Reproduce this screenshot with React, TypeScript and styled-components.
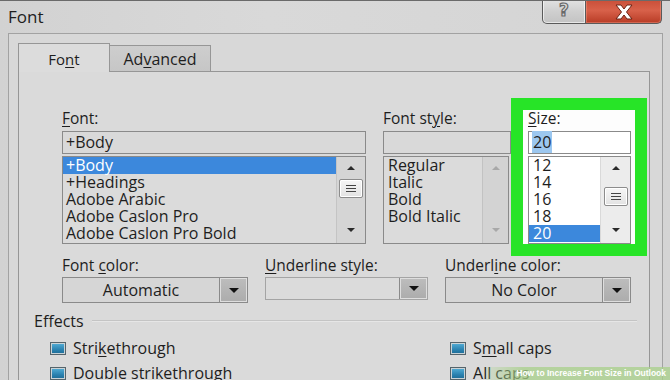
import React from "react";
import styled, { createGlobalStyle } from "styled-components";

const Global = createGlobalStyle`
  html, body { margin: 0; padding: 0; background: #d5d5d5; }
  body { font-family: "Open Sans", "Noto Sans", sans-serif; }
  * { box-sizing: border-box; }
`;

const Dialog = styled.div`
  position: relative;
  width: 670px;
  height: 380px;
  overflow: hidden;
  display: flex;
  flex-direction: column;
  background: linear-gradient(90deg, #d2d2d2, #d9d9d9 40%, #d4d4d4);
  border-top: 1px solid #6a6a6a;
  color: #1e1e1e;
  font-family: "Open Sans", "Noto Sans", sans-serif;
`;

const TitleBar = styled.div`
  height: 32px;
  display: flex;
  align-items: flex-start;
  padding: 0 8px 0 8px;
  flex-shrink: 0;
`;

const Title = styled.div`
  flex: 1;
  font-size: 17px;
  line-height: 33px;
  margin-top: -1px;
`;

const Caption = styled.div`
  display: flex;
  margin-top: -1px;
`;

const CaptionButton = styled.div<{ $close?: boolean }>`
  width: ${(p) => (p.$close ? 76 : 44)}px;
  height: 24px;
  display: flex;
  align-items: center;
  justify-content: center;
  border: 1px solid #5a5a5a;
  border-top: none;
  ${(p) => (p.$close ? "border-left: none;" : "")}
  border-radius: ${(p) => (p.$close ? "0 0 5px 0" : "0 0 0 5px")};
  background: ${(p) =>
    p.$close
      ? "linear-gradient(#c94f39, #d8614a 45%, #b83c26)"
      : "linear-gradient(#e2e2e2, #cfcfcf 50%, #c3c3c3)"};
  box-shadow: inset 0 0 0 1px ${(p) => (p.$close ? "rgba(255,180,160,0.35)" : "rgba(255,255,255,0.6)")};
`;

const HelpGlyph = styled.span`
  font-family: "DejaVu Sans", sans-serif;
  font-weight: bold;
  font-size: 17px;
  line-height: 1;
  color: #d8d8d8;
  -webkit-text-stroke: 1.2px #6a6a6a;
  margin-top: -2px;
`;

const Frame = styled.div`
  flex: 1;
  margin: 0 7px 0 8px;
  border: 1px solid #a2a2a2;
  border-bottom: none;
  padding: 9px 12px 0 9px;
  display: flex;
  flex-direction: column;
  background: #d8d8d8;
`;

const TabStrip = styled.div`
  display: flex;
  align-items: flex-end;
  height: 28px;
  position: relative;
  z-index: 1;
`;

const Tab = styled.div<{ $active?: boolean }>`
  width: ${(p) => (p.$active ? 92 : 101)}px;
  height: ${(p) => (p.$active ? 29 : 26)}px;
  margin-bottom: ${(p) => (p.$active ? -1 : 0)}px;
  border: 1px solid #969696;
  border-bottom: none;
  ${(p) => (p.$active ? "" : "border-left: none;")}
  background: ${(p) => (p.$active ? "#dcdcdc" : "linear-gradient(#cecece, #c6c6c6)")};
  display: flex;
  align-items: center;
  justify-content: center;
  font-size: ${(p) => (p.$active ? 15 : 16)}px;
  padding-top: ${(p) => (p.$active ? 2 : 1)}px;
`;

const TabPanel = styled.div`
  flex: 1;
  border: 1px solid #969696;
  border-bottom: none;
  background: #dadada;
  padding: 26px 0 0 15px;
  display: flex;
  flex-direction: column;
`;

const Fields = styled.div`
  padding-left: 28px;
  display: flex;
  flex-direction: column;
`;

const TopRow = styled.div`
  display: flex;
  align-items: flex-start;
`;

const Column = styled.div<{ $w: number; $gapLeft?: number; $top?: number }>`
  width: ${(p) => p.$w}px;
  margin-top: ${(p) => p.$top ?? 12}px;
  margin-left: ${(p) => p.$gapLeft ?? 0}px;
  display: flex;
  flex-direction: column;
`;

const Highlight = styled.div`
  margin-left: 2px;
  border: 12px solid #27e427;
  background: #fdfdfd;
  padding: 0 4px 0 5px;
  width: 136px;
  display: flex;
  flex-direction: column;
`;

const Label = styled.div`
  font-size: 15.5px;
  line-height: 17px;
  height: 17px;
  margin-bottom: 4px;
  white-space: nowrap;
`;

const U = styled.span`
  text-decoration: underline;
  text-underline-offset: 2px;
  text-decoration-thickness: 1px;
`;

const TextBox = styled.div<{ $white?: boolean; $w?: number }>`
  height: 23px;
  width: ${(p) => (p.$w ? `${p.$w}px` : "auto")};
  border: 1px solid #8a8a8a;
  background: ${(p) => (p.$white ? "#ffffff" : "#d9d9d9")};
  font-size: 16px;
  line-height: 21px;
  padding-left: 3px;
  white-space: nowrap;
`;

const Sel = styled.span`
  background: #9cc7ef;
  padding: 0 1px;
`;

const ListBox = styled.div<{ $white?: boolean }>`
  margin-top: 2px;
  height: 88px;
  border: 1px solid #8a8a8a;
  background: ${(p) => (p.$white ? "#ffffff" : "#dbdbdb")};
  display: flex;
`;

const Items = styled.div`
  flex: 1;
  overflow: hidden;
`;

const Item = styled.div<{ $selected?: boolean; $pad?: number }>`
  height: 17px;
  line-height: 17px;
  font-size: 16px;
  padding-left: ${(p) => p.$pad ?? 3}px;
  white-space: nowrap;
  background: ${(p) => (p.$selected ? "#3c88dc" : "transparent")};
  color: ${(p) => (p.$selected ? "#ffffff" : "inherit")};
`;

const ScrollBar = styled.div<{ $w: number; $bg: string }>`
  width: ${(p) => p.$w}px;
  background: ${(p) => p.$bg};
  border-left: 1px solid rgba(0, 0, 0, 0.08);
  display: flex;
  flex-direction: column;
  align-items: center;
  padding: 1px 0 3px;
`;

const ArrowBox = styled.div`
  height: 20px;
  display: flex;
  align-items: center;
  justify-content: center;
`;

const Spacer = styled.div`
  flex: 1;
`;

const Arrow = styled.div<{ $down?: boolean; $disabled?: boolean }>`
  width: 0;
  height: 0;
  border-left: 4px solid transparent;
  border-right: 4px solid transparent;
  ${(p) =>
    p.$down
      ? `border-top: 4px solid ${p.$disabled ? "#a8a8a8" : "#2a2a2a"};`
      : `border-bottom: 4px solid ${p.$disabled ? "#a8a8a8" : "#2a2a2a"};`}
`;

const Thumb = styled.div<{ $offset: number }>`
  margin-top: ${(p) => p.$offset}px;
  width: 24px;
  height: 19px;
  border: 1px solid #8c8c8c;
  border-radius: 2px;
  background: linear-gradient(#f6f6f6, #e2e2e2);
  box-shadow: inset 0 0 0 1px #ffffff;
  display: flex;
  align-items: center;
  justify-content: center;
`;

const BottomGrid = styled.div`
  display: grid;
  grid-template-columns: 186px 163px 186px;
  column-gap: 17px;
  margin-top: 1px;
`;

const DropField = styled.div`
  display: flex;
  flex-direction: column;
`;

const DropLabel = styled(Label)`
  margin-bottom: 3px;
`;

const Dropdown = styled.div<{ $disabled?: boolean }>`
  height: ${(p) => (p.$disabled ? 23 : 26)}px;
  border: 1px solid ${(p) => (p.$disabled ? "#a4a4a4" : "#8a8a8a")};
  background: ${(p) => (p.$disabled ? "#dbdbdb" : "#d6d6d6")};
  display: flex;
`;

const DropText = styled.div`
  flex: 1;
  text-align: center;
  font-size: 16px;
  line-height: 24px;
`;

const DropButton = styled.div`
  width: 28px;
  border-left: 1px solid #8a8a8a;
  background: linear-gradient(#bdbdbd, #acacac);
  box-shadow: inset 0 0 0 1px #dedede;
  display: flex;
  align-items: center;
  justify-content: center;
`;

const DropArrow = styled.div`
  width: 0;
  height: 0;
  border-left: 5px solid transparent;
  border-right: 5px solid transparent;
  border-top: 5px solid #111;
`;

const Effects = styled.div`
  margin-top: 9px;
  margin-right: 12px;
  display: flex;
  align-items: center;
  gap: 8px;
  height: 18px;
`;

const EffectsTitle = styled.div`
  font-size: 16px;
  line-height: 18px;
`;

const Rule = styled.div`
  flex: 1;
  height: 2px;
  border-top: 1px solid #c4c4c4;
  border-bottom: 1px solid #e6e6e6;
`;

const CheckGrid = styled.div`
  display: grid;
  grid-template-columns: 400px 1fr;
  row-gap: 5px;
  padding-left: 16px;
  margin-top: 8px;
`;

const CheckRow = styled.div`
  display: flex;
  align-items: center;
  gap: 7px;
  height: 20px;
  font-size: 16px;
  white-space: nowrap;
`;

const Box = styled.div`
  width: 16px;
  height: 13px;
  border: 1px solid #55646b;
  box-shadow: inset 0 0 0 1px #c9d3d7;
  background: linear-gradient(#55b0d8, #2a82b0 60%, #1d6b95);
`;

const Watermark = styled.div`
  position: absolute;
  right: 0;
  bottom: 0;
  height: 13px;
  padding: 0 4px 0 30px;
  background: linear-gradient(90deg, rgba(176, 214, 150, 0.2), rgba(168, 208, 138, 0.75) 20%);
  color: #ffffff;
  font-family: "Liberation Sans", Arial, sans-serif;
  font-weight: bold;
  font-size: 8.5px;
  line-height: 13px;
  white-space: nowrap;
`;

const Grip = () => (
  <svg width="12" height="9" viewBox="0 0 12 9">
    <g stroke="#444" strokeWidth="1">
      <line x1="1" y1="1.5" x2="11" y2="1.5" />
      <line x1="1" y1="4.5" x2="11" y2="4.5" />
      <line x1="1" y1="7.5" x2="11" y2="7.5" />
    </g>
  </svg>
);

const CloseIcon = () => (
  <svg width="22" height="16" viewBox="0 0 22 16">
    <path
      d="M3 1 H8 L11 5 L14 1 H19 L13.5 8 L19 15 H14 L11 11 L8 15 H3 L8.5 8 Z"
      fill="#ffffff"
      stroke="#6b2315"
      strokeWidth="1"
      strokeLinejoin="round"
    />
  </svg>
);

type SB = { bg: string; w: number; thumb?: number; disabled?: boolean };

const Scroll = ({ bg, w, thumb, disabled }: SB) => (
  <ScrollBar $w={w} $bg={bg}>
    <ArrowBox>
      <Arrow $disabled={disabled} />
    </ArrowBox>
    {thumb !== undefined && (
      <Thumb $offset={thumb}>
        <Grip />
      </Thumb>
    )}
    <Spacer />
    <ArrowBox>
      <Arrow $down $disabled={disabled} />
    </ArrowBox>
  </ScrollBar>
);

const fonts = ["+Body", "+Headings", "Adobe Arabic", "Adobe Caslon Pro", "Adobe Caslon Pro Bold"];
const styles = ["Regular", "Italic", "Bold", "Bold Italic"];
const sizes = ["12", "14", "16", "18", "20"];

export default function App() {
  return (
    <>
      <Global />
      <Dialog>
        <TitleBar>
          <Title>Font</Title>
          <Caption>
            <CaptionButton>
              <HelpGlyph>?</HelpGlyph>
            </CaptionButton>
            <CaptionButton $close>
              <CloseIcon />
            </CaptionButton>
          </Caption>
        </TitleBar>
        <Frame>
          <TabStrip>
            <Tab $active>
              <span>
                Fo<U>n</U>t
              </span>
            </Tab>
            <Tab>
              <span>
                Ad<U>v</U>anced
              </span>
            </Tab>
          </TabStrip>
          <TabPanel>
            <Fields>
              <TopRow>
                <Column $w={304}>
                  <Label>
                    <U>F</U>ont:
                  </Label>
                  <TextBox>+Body</TextBox>
                  <ListBox>
                    <Items>
                      {fonts.map((f, i) => (
                        <Item key={f} $selected={i === 0}>
                          {f}
                        </Item>
                      ))}
                    </Items>
                    <Scroll bg="#d5d5d5" w={29} thumb={1} />
                  </ListBox>
                </Column>
                <Column $w={126} $gapLeft={17}>
                  <Label>
                    Font st<U>y</U>le:
                  </Label>
                  <TextBox $w={128} />
                  <ListBox>
                    <Items>
                      {styles.map((s) => (
                        <Item key={s} $pad={4}>
                          {s}
                        </Item>
                      ))}
                    </Items>
                    <Scroll bg="#d3d3d3" w={26} disabled />
                  </ListBox>
                </Column>
                <Highlight>
                  <Column $w={103} $top={0}>
                    <Label>
                      <U>S</U>ize:
                    </Label>
                    <TextBox $white>
                      <Sel>20</Sel>
                    </TextBox>
                    <ListBox $white>
                      <Items>
                        {sizes.map((s, i) => (
                          <Item key={s} $pad={4} $selected={i === 4}>
                            {s}
                          </Item>
                        ))}
                      </Items>
                      <Scroll bg="#ececec" w={30} thumb={9} />
                    </ListBox>
                  </Column>
                </Highlight>
              </TopRow>
              <BottomGrid>
                <DropField>
                  <DropLabel>
                    Font <U>c</U>olor:
                  </DropLabel>
                  <Dropdown>
                    <DropText>Automatic</DropText>
                    <DropButton>
                      <DropArrow />
                    </DropButton>
                  </Dropdown>
                </DropField>
                <DropField>
                  <DropLabel>
                    <U>U</U>nderline style:
                  </DropLabel>
                  <Dropdown $disabled>
                    <DropText />
                    <DropButton>
                      <DropArrow />
                    </DropButton>
                  </Dropdown>
                </DropField>
                <DropField>
                  <DropLabel>
                    Underl<U>i</U>ne color:
                  </DropLabel>
                  <Dropdown>
                    <DropText>No Color</DropText>
                    <DropButton>
                      <DropArrow />
                    </DropButton>
                  </Dropdown>
                </DropField>
              </BottomGrid>
            </Fields>
            <Effects>
              <EffectsTitle>Effects</EffectsTitle>
              <Rule />
            </Effects>
            <CheckGrid>
              <CheckRow>
                <Box />
                <span>
                  Stri<U>k</U>ethrough
                </span>
              </CheckRow>
              <CheckRow>
                <Box />
                <span>
                  S<U>m</U>all caps
                </span>
              </CheckRow>
              <CheckRow>
                <Box />
                <span>
                  Dou<U>b</U>le strikethrough
                </span>
              </CheckRow>
              <CheckRow>
                <Box />
                <span>
                  <U>A</U>ll caps
                </span>
              </CheckRow>
            </CheckGrid>
          </TabPanel>
        </Frame>
        <Watermark>How to Increase Font Size in Outlook</Watermark>
      </Dialog>
    </>
  );
}
